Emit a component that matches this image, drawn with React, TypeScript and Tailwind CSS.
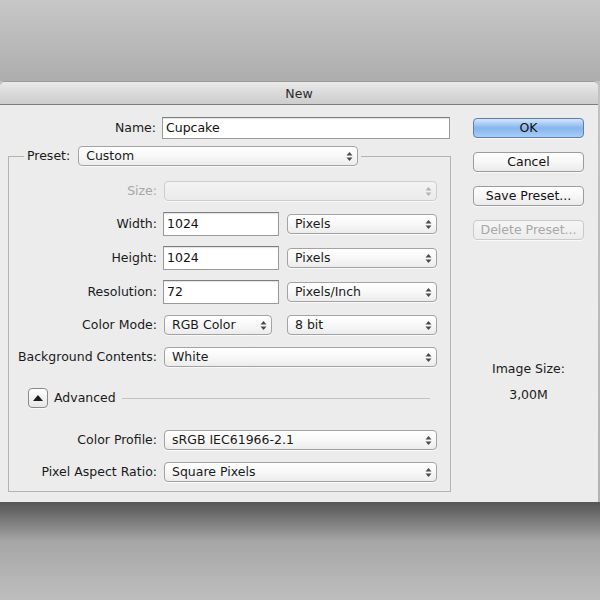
import React from "react";

const font = { fontFamily: '"DejaVu Sans", "Liberation Sans", sans-serif' };

function Arrows({ dim = false }: { dim?: boolean }) {
  return (
    <svg width="7" height="11" viewBox="0 0 7 11" className="shrink-0">
      <path d="M3.5 1 L6.5 4.5 L0.5 4.5 Z" fill={dim ? "#b4b4b4" : "#4a4a4a"} />
      <path d="M3.5 10 L6.5 6.5 L0.5 6.5 Z" fill={dim ? "#b4b4b4" : "#4a4a4a"} />
    </svg>
  );
}

function Select({
  value,
  width,
  disabled = false,
}: {
  value?: string;
  width: string;
  disabled?: boolean;
}) {
  return (
    <div
      className={`${width} h-[20px] flex items-center justify-between pl-[7px] pr-[4px] rounded-[4px] border shadow-[0_1px_0_rgba(255,255,255,0.7)] ${
        disabled
          ? "border-[#cdcdcd] bg-gradient-to-b from-[#f4f4f4] to-[#ebebeb]"
          : "border-[#a3a3a3] bg-gradient-to-b from-white via-[#f8f8f8] to-[#ececec]"
      }`}
    >
      <span className="text-[12.5px] text-[#1a1a1a] leading-none">{value}</span>
      <Arrows dim={disabled} />
    </div>
  );
}

function TextInput({ value, width, height }: { value: string; width: string; height: string }) {
  return (
    <div
      className={`${width} ${height} flex items-center pl-[3px] bg-white border border-[#9a9a9a] border-t-[#7d7d7d] shadow-[inset_0_1px_1px_rgba(0,0,0,0.12)]`}
    >
      <span className="text-[12.5px] text-[#111] leading-none">{value}</span>
    </div>
  );
}

function Label({ text, dim = false }: { text: string; dim?: boolean }) {
  return (
    <div
      className={`w-[148px] shrink-0 text-right text-[12.5px] leading-none ${
        dim ? "text-[#a6a6a6]" : "text-[#1a1a1a]"
      }`}
    >
      {text}
    </div>
  );
}

function Button({
  text,
  primary = false,
  disabled = false,
}: {
  text: string;
  primary?: boolean;
  disabled?: boolean;
}) {
  let cls = "border-[#9c9c9c] bg-gradient-to-b from-white via-[#f7f7f7] to-[#ebebeb] text-[#111]";
  if (primary)
    cls =
      "border-[#5a7fb5] bg-gradient-to-b from-[#d5e6fb] via-[#86b5ee] to-[#a9cdf7] text-[#111]";
  if (disabled)
    cls = "border-[#cacaca] bg-gradient-to-b from-[#f6f6f6] to-[#ececec] text-[#a8a8a8]";
  return (
    <div
      className={`w-[111px] h-[20px] flex items-center justify-center rounded-[4px] border text-[12.5px] leading-none shadow-[0_1px_0_rgba(255,255,255,0.7)] ${cls}`}
    >
      {text}
    </div>
  );
}

export default function App() {
  return (
    <div
      className="w-[600px] h-[600px] overflow-hidden flex flex-col bg-gradient-to-b from-[#c6c6c6] to-[#b0b0b0]"
      style={font}
    >
      <div className="h-[81px] shrink-0 bg-gradient-to-b from-[#c7c7c7] to-[#adadad]" />

      <div className="w-[598px] shrink-0 bg-[#ececec] rounded-t-[5px] border-t border-[#9c9c9c]">
        <div className="h-[23px] flex items-center justify-center rounded-t-[5px] bg-gradient-to-b from-[#eaeaea] via-[#dadada] to-[#cdcdcd] border-b border-[#7c7c7c]">
          <span className="text-[12.5px] text-[#2a2a2a] leading-none pt-[2px]">New</span>
        </div>

        <div className="flex">
          <div className="w-[458px] shrink-0 pl-[8px]">
            <div className="flex items-center mt-[12px] h-[22px]">
              <Label text="Name:" />
              <div className="w-[6px]" />
              <TextInput value="Cupcake" width="w-[288px]" height="h-[22px]" />
            </div>

            <fieldset className="mt-[7px] w-[443px] border border-[#b3b3b3] pl-0 pr-0 pb-[9px]">
              <legend className="ml-[15px] px-[3px] flex items-center h-[20px]">
                <span className="text-[12.5px] text-[#1a1a1a] leading-none mr-[8px]">Preset:</span>
                <Select value="Custom" width="w-[280px]" />
              </legend>

              <div className="flex items-center mt-[15px] h-[20px]">
                <Label text="Size:" dim />
                <div className="w-[7px]" />
                <Select width="w-[273px]" disabled />
              </div>

              <div className="flex items-center mt-[11px] h-[24px]">
                <Label text="Width:" />
                <div className="w-[6px]" />
                <TextInput value="1024" width="w-[116px]" height="h-[24px]" />
                <div className="w-[8px]" />
                <Select value="Pixels" width="w-[150px]" />
              </div>

              <div className="flex items-center mt-[10px] h-[24px]">
                <Label text="Height:" />
                <div className="w-[6px]" />
                <TextInput value="1024" width="w-[116px]" height="h-[24px]" />
                <div className="w-[8px]" />
                <Select value="Pixels" width="w-[150px]" />
              </div>

              <div className="flex items-center mt-[10px] h-[24px]">
                <Label text="Resolution:" />
                <div className="w-[6px]" />
                <TextInput value="72" width="w-[116px]" height="h-[24px]" />
                <div className="w-[8px]" />
                <Select value="Pixels/Inch" width="w-[150px]" />
              </div>

              <div className="flex items-center mt-[10px] h-[22px]">
                <Label text="Color Mode:" />
                <div className="w-[7px]" />
                <Select value="RGB Color" width="w-[108px]" />
                <div className="w-[15px]" />
                <Select value="8 bit" width="w-[150px]" />
              </div>

              <div className="flex items-center mt-[10px] h-[22px]">
                <Label text="Background Contents:" />
                <div className="w-[7px]" />
                <Select value="White" width="w-[273px]" />
              </div>

              <div className="flex items-center mt-[20px] h-[20px] pl-[19px] pr-[20px]">
                <div className="w-[20px] h-[20px] flex items-center justify-center rounded-[4px] border border-[#8a8a8a] bg-gradient-to-b from-white to-[#e6e6e6] shadow-[0_1px_0_rgba(255,255,255,0.7)]">
                  <svg width="10" height="6" viewBox="0 0 10 6">
                    <path d="M5 0 L10 6 L0 6 Z" fill="#1e1e1e" />
                  </svg>
                </div>
                <span className="ml-[6px] text-[12.5px] text-[#1a1a1a] leading-none">Advanced</span>
                <div className="flex-1 ml-[6px] h-px bg-[#c2c2c2]" />
              </div>

              <div className="flex items-center mt-[22px] h-[20px]">
                <Label text="Color Profile:" />
                <div className="w-[7px]" />
                <Select value="sRGB IEC61966-2.1" width="w-[273px]" />
              </div>

              <div className="flex items-center mt-[12px] h-[20px]">
                <Label text="Pixel Aspect Ratio:" />
                <div className="w-[7px]" />
                <Select value="Square Pixels" width="w-[273px]" />
              </div>
            </fieldset>
            <div className="h-[10px]" />
          </div>

          <div className="flex-1 flex flex-col pl-[15px] pt-[13px]">
            <div className="flex flex-col gap-[14px]">
              <Button text="OK" primary />
              <Button text="Cancel" />
              <Button text="Save Preset..." />
              <Button text="Delete Preset..." disabled />
            </div>
            <div className="w-[111px] mt-[123px] flex flex-col items-center gap-[13px] text-[12.5px] text-[#1a1a1a] leading-none">
              <span>Image Size:</span>
              <span>3,00M</span>
            </div>
          </div>
        </div>
      </div>

      <div className="flex-1 bg-gradient-to-b from-[#555555] via-[#a6a6a6] via-40% to-[#bebebe]" />
    </div>
  );
}
